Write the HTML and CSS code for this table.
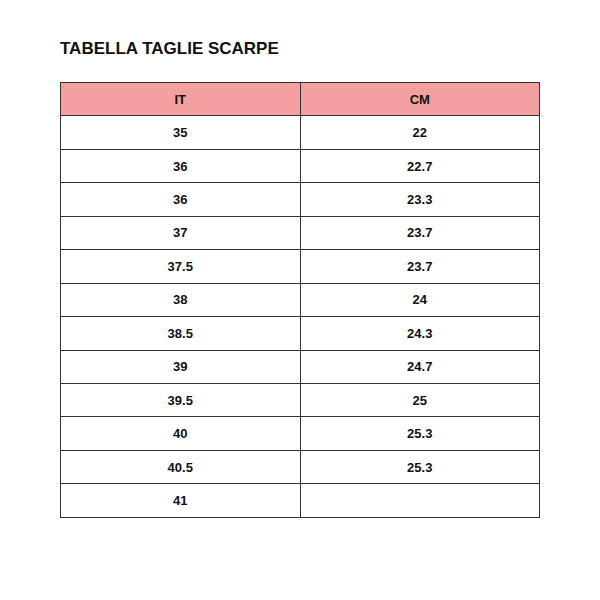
FILE: index.html
```html
<!DOCTYPE html>
<html>
<head>
<meta charset="utf-8">
<link rel="stylesheet" href="styles.css">
</head>
<body>
<div class="page">
  <h1 class="title">TABELLA TAGLIE SCARPE</h1>
  <table class="sizes">
    <thead>
      <tr><th>IT</th><th>CM</th></tr>
    </thead>
    <tbody>
      <tr><td>35</td><td>22</td></tr>
      <tr><td>36</td><td>22.7</td></tr>
      <tr><td>36</td><td>23.3</td></tr>
      <tr><td>37</td><td>23.7</td></tr>
      <tr><td>37.5</td><td>23.7</td></tr>
      <tr><td>38</td><td>24</td></tr>
      <tr><td>38.5</td><td>24.3</td></tr>
      <tr><td>39</td><td>24.7</td></tr>
      <tr><td>39.5</td><td>25</td></tr>
      <tr><td>40</td><td>25.3</td></tr>
      <tr><td>40.5</td><td>25.3</td></tr>
      <tr><td>41</td><td></td></tr>
    </tbody>
  </table>
</div>
</body>
</html>
```

FILE: styles.css
```css
html, body {
  margin: 0;
  padding: 0;
  background: #ffffff;
}
.page {
  padding: 39px 60px 0 60px;
  font-family: "Liberation Sans", Arial, sans-serif;
  color: #111111;
}
.title {
  margin: 0 0 23px 0;
  font-size: 17px;
  font-weight: bold;
  line-height: 20px;
}
.sizes {
  width: 480px;
  border-collapse: collapse;
  table-layout: fixed;
}
.sizes th,
.sizes td {
  border: 1px solid #333333;
  height: 32.45px;
  padding: 0;
  text-align: center;
  vertical-align: middle;
  font-size: 13px;
  font-weight: bold;
  box-sizing: content-box;
}
.sizes th {
  background: #f4a0a0;
}
```
